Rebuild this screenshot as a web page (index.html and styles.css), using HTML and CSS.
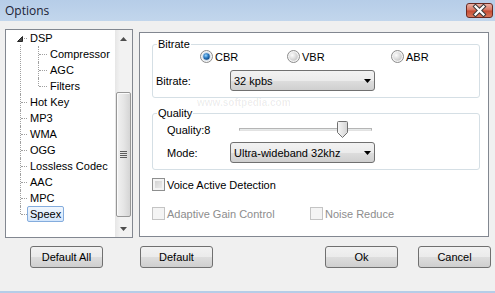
FILE: index.html
```html
<!DOCTYPE html>
<html lang="en">
<head>
  <meta charset="UTF-8">
  <title>Options</title>
  <link rel="stylesheet" href="styles.css">
</head>
<body>
  <div class="window">
    <div class="titlebar">
      <span class="title">Options</span>
      <button class="close" type="button">
        <svg width="25" height="13" viewBox="0 0 25 13">
          <path d="M8.5 2.5 L16.5 10.5 M16.5 2.5 L8.5 10.5" stroke="#3a3a3a" stroke-width="4.2" stroke-linecap="square"/>
          <path d="M8.5 2.5 L16.5 10.5 M16.5 2.5 L8.5 10.5" stroke="#fff" stroke-width="2.2" stroke-linecap="square"/>
        </svg>
      </button>
    </div>

    <div class="client">
      <div class="main">
        <div class="tree">
          <ul class="tree-list">
            <li class="node first">
              <div class="row">
                <svg class="expander" width="6" height="6" viewBox="0 0 6 6"><polygon points="5.5,0.5 5.5,5.5 0.5,5.5" fill="#4a4a4a" stroke="#262626" stroke-width="1"/></svg>
                <span class="label">DSP</span>
              </div>
              <ul class="sub">
                <li class="node"><div class="row"><span class="label">Compressor</span></div></li>
                <li class="node"><div class="row"><span class="label">AGC</span></div></li>
                <li class="node last"><div class="row"><span class="label">Filters</span></div></li>
              </ul>
            </li>
            <li class="node"><div class="row"><span class="label">Hot Key</span></div></li>
            <li class="node"><div class="row"><span class="label">MP3</span></div></li>
            <li class="node"><div class="row"><span class="label">WMA</span></div></li>
            <li class="node"><div class="row"><span class="label">OGG</span></div></li>
            <li class="node"><div class="row"><span class="label">Lossless Codec</span></div></li>
            <li class="node"><div class="row"><span class="label">AAC</span></div></li>
            <li class="node"><div class="row"><span class="label">MPC</span></div></li>
            <li class="node last"><div class="row"><span class="label selected">Speex</span></div></li>
          </ul>
          <div class="scrollbar">
            <div class="scroll-btn">
              <svg width="7" height="4" viewBox="0 0 7 4"><polygon points="3.5,0 7,4 0,4" fill="#4d4d4d"/></svg>
            </div>
            <div class="scroll-track">
              <div class="thumb">
                <svg width="7" height="8" viewBox="0 0 7 8">
                  <path d="M0 0.5 H7 M0 2.5 H7 M0 4.5 H7 M0 6.5 H7" stroke="#5c5c5c" stroke-width="1"/>
                </svg>
              </div>
            </div>
            <div class="scroll-btn">
              <svg width="7" height="4" viewBox="0 0 7 4"><polygon points="0,0 7,0 3.5,4" fill="#4d4d4d"/></svg>
            </div>
          </div>
        </div>

        <div class="panel">
          <fieldset class="group">
            <legend>Bitrate</legend>
            <div class="radio-row">
              <label class="radio wide1">
                <svg width="13" height="13" viewBox="0 0 13 13">
                  <defs>
                    <radialGradient id="dot" cx="0.4" cy="0.35" r="0.7">
                      <stop offset="0" stop-color="#9fd6fb"/>
                      <stop offset="0.5" stop-color="#2d7fc7"/>
                      <stop offset="1" stop-color="#0d3f78"/>
                    </radialGradient>
                  </defs>
                  <circle cx="6.5" cy="6.5" r="6" fill="#f4f4f4" stroke="#8b8b8b"/>
                  <circle cx="6.5" cy="6.5" r="4.2" fill="#c8d8e8"/>
                  <circle cx="6.5" cy="6.5" r="3.2" fill="url(#dot)"/>
                </svg>
                CBR
              </label>
              <label class="radio wide2">
                <svg width="13" height="13" viewBox="0 0 13 13">
                  <defs>
                    <radialGradient id="off" cx="0.35" cy="0.35" r="0.75">
                      <stop offset="0" stop-color="#fdfdfd"/>
                      <stop offset="1" stop-color="#c4c4c4"/>
                    </radialGradient>
                  </defs>
                  <circle cx="6.5" cy="6.5" r="6" fill="#f4f4f4" stroke="#8b8b8b"/>
                  <circle cx="6.5" cy="6.5" r="4.3" fill="url(#off)"/>
                </svg>
                VBR
              </label>
              <label class="radio">
                <svg width="13" height="13" viewBox="0 0 13 13">
                  <circle cx="6.5" cy="6.5" r="6" fill="#f4f4f4" stroke="#8b8b8b"/>
                  <circle cx="6.5" cy="6.5" r="4.3" fill="url(#off)"/>
                </svg>
                ABR
              </label>
            </div>
            <div class="field-row">
              <span class="field-label bitrate-label">Bitrate:</span>
              <div class="combo">
                <span>32 kpbs</span>
                <svg width="7" height="4" viewBox="0 0 7 4"><polygon points="0,0 7,0 3.5,4" fill="#000"/></svg>
              </div>
            </div>
          </fieldset>

          <div class="watermark-url">www.softpedia.com</div>

          <fieldset class="group quality">
            <legend>Quality</legend>
            <div class="field-row slider-row">
              <span class="field-label quality-label">Quality:8</span>
              <div class="slider">
                <div class="track"></div>
                <svg class="slider-thumb" width="11" height="17" viewBox="0 0 11 17">
                  <defs>
                    <linearGradient id="thumbfill" x1="0" y1="0" x2="1" y2="0">
                      <stop offset="0" stop-color="#f7f7f7"/>
                      <stop offset="1" stop-color="#d4d4d4"/>
                    </linearGradient>
                  </defs>
                  <path d="M1.5 0.5 H9.5 Q10.5 0.5 10.5 1.5 V11.5 L5.5 16.5 L0.5 11.5 V1.5 Q0.5 0.5 1.5 0.5 Z" fill="url(#thumbfill)" stroke="#707070"/>
                </svg>
              </div>
            </div>
            <div class="field-row mode-row">
              <span class="field-label mode-label">Mode:</span>
              <div class="combo">
                <span>Ultra-wideband 32khz</span>
                <svg width="7" height="4" viewBox="0 0 7 4"><polygon points="0,0 7,0 3.5,4" fill="#000"/></svg>
              </div>
            </div>
          </fieldset>

          <div class="check-row">
            <label class="check"><span class="box"></span>Voice Active Detection</label>
          </div>
          <div class="check-row disabled-row">
            <label class="check disabled agc"><span class="box"></span>Adaptive Gain Control</label>
            <label class="check disabled"><span class="box"></span>Noise Reduce</label>
          </div>
        </div>
      </div>

      <div class="buttons">
        <button class="btn" type="button">Default All</button>
        <button class="btn default" type="button">Default</button>
        <button class="btn ok" type="button">Ok</button>
        <button class="btn cancel" type="button">Cancel</button>
      </div>
    </div>
  </div>
</body>
</html>
```

FILE: styles.css
```css
body {
  margin: 0;
  font-family: "Liberation Sans", Arial, sans-serif;
  font-size: 11px;
  color: #000;
}
.window {
  width: 495px;
  height: 293px;
  box-sizing: border-box;
  display: flex;
  flex-direction: column;
  background: #f0f0f0;
  border-bottom: 2px solid #b6cde8;
}
.titlebar {
  height: 21px;
  flex: none;
  display: flex;
  align-items: flex-start;
  padding-left: 5px;
  background: linear-gradient(#b6cde8, #c2d6ec);
}
.title {
  font-family: "Open Sans", sans-serif;
  font-size: 12px;
  line-height: 21px;
  color: #1b2233;
}
.close {
  margin: 3px 2px 0 auto;
  width: 27px;
  height: 15px;
  padding: 0;
  border: 1px solid #6a2a22;
  border-radius: 3px;
  background: linear-gradient(#eab2a6, #d6735f 48%, #c54a31 52%, #d8765a);
  display: flex;
  align-items: center;
  justify-content: center;
}
.close svg {
  display: block;
}
.client {
  flex: 1;
  padding: 8px 4px 0 5px;
}
.main {
  display: flex;
  align-items: flex-start;
}

/* tree */
.tree {
  width: 128px;
  height: 209px;
  box-sizing: border-box;
  border: 1px solid #828790;
  background: #fff;
  display: flex;
}
.tree-list, .sub {
  list-style: none;
  margin: 0;
  padding: 0;
}
.tree-list {
  flex: 1;
}
.node {
  position: relative;
}
.row {
  position: relative;
  height: 16px;
  padding-left: 21px;
}
.sub .row {
  padding-left: 41px;
}
.label {
  display: inline-block;
  height: 14px;
  line-height: 15px;
  padding: 0 2px;
  border: 1px solid transparent;
  border-radius: 2px;
  white-space: nowrap;
}
.label.selected {
  border-color: #84acdd;
  background: linear-gradient(#f1f7fe, #d3e6fc);
}
/* connector lines */
.tree-list > .node::before {
  content: "";
  position: absolute;
  left: 14px;
  top: 0;
  bottom: 0;
  border-left: 1px dotted #a0a0a0;
}
.tree-list > .node.first::before {
  top: 15px;
}
.tree-list > .node.last::before {
  bottom: auto;
  height: 8px;
}
.tree-list > .node > .row::after {
  content: "";
  position: absolute;
  left: 15px;
  top: 8px;
  width: 6px;
  border-top: 1px dotted #a0a0a0;
}
.sub > .node::before {
  content: "";
  position: absolute;
  left: 32px;
  top: 0;
  bottom: 0;
  border-left: 1px dotted #a0a0a0;
}
.sub > .node.last::before {
  bottom: auto;
  height: 8px;
}
.sub .row::after {
  content: "";
  position: absolute;
  left: 33px;
  top: 8px;
  width: 8px;
  border-top: 1px dotted #a0a0a0;
}
.expander {
  position: absolute;
  left: 11px;
  top: 6px;
  z-index: 1;
  background: #fff;
}

/* scrollbar */
.scrollbar {
  width: 17px;
  display: flex;
  flex-direction: column;
  background: linear-gradient(90deg, #e6e6e6, #f2f2f2 30%, #f2f2f2);
}
.scroll-btn {
  height: 17px;
  display: flex;
  align-items: center;
  justify-content: center;
}
.scroll-btn svg {
  display: block;
}
.scroll-track {
  flex: 1;
  padding: 45px 1px 0;
}
.thumb {
  height: 125px;
  box-sizing: border-box;
  border: 1px solid #979797;
  border-radius: 2px;
  background: linear-gradient(90deg, #f1f1f1, #e6e6e6 50%, #d5d5d5);
  box-shadow: inset 1px 1px 0 #fbfbfb;
  display: flex;
  align-items: center;
  justify-content: center;
}
.thumb svg {
  display: block;
}

/* right panel */
.panel {
  position: relative;
  margin: 3px 0 0 6px;
  width: 350px;
  height: 205px;
  box-sizing: border-box;
  border: 1px solid #828790;
  background: #fff;
}
.group {
  margin: 5px 8px 0 12px;
  padding: 0 0 6px;
  border: 1px solid #d5dfe5;
  border-radius: 3px;
  min-width: 0;
}
.group.quality {
  margin-top: 9px;
}
.group legend {
  margin-left: 4px;
  padding: 0 1px;
  line-height: 12px;
}
.radio-row {
  display: flex;
  align-items: center;
  height: 13px;
  padding-left: 47px;
}
.radio {
  display: flex;
  align-items: center;
  gap: 2px;
}
.radio svg {
  display: block;
}
.radio.wide1 {
  width: 87px;
}
.radio.wide2 {
  width: 104px;
}
.field-row {
  display: flex;
  align-items: center;
  margin-top: 7px;
}
.bitrate-label {
  padding-left: 3px;
  width: 74px;
}
.slider-row {
  margin-top: 2px;
  height: 17px;
}
.mode-row {
  margin-top: 4px;
}
.quality-label {
  padding-left: 14px;
  width: 72px;
}
.mode-label {
  padding-left: 14px;
  width: 63px;
}
.combo {
  width: 145px;
  height: 21px;
  box-sizing: border-box;
  border: 1px solid #707070;
  border-radius: 3px;
  padding: 0 3px 0 3px;
  display: flex;
  align-items: center;
  justify-content: space-between;
  background: linear-gradient(#f2f2f2, #ebebeb 50%, #dddddd 51%, #cfcfcf);
}
.combo svg {
  display: block;
}
.slider {
  position: relative;
  width: 133px;
  height: 17px;
}
.track {
  margin-top: 7px;
  height: 1px;
  border: 1px solid #b5b5b5;
  border-bottom-color: #e2e2e2;
  background: #e7eaea;
}
.slider-thumb {
  position: absolute;
  left: 98px;
  top: 0;
  display: block;
}
.check-row {
  display: flex;
  margin: 8px 0 0 12px;
}
.check-row.disabled-row {
  margin-top: 16px;
}
.check {
  display: flex;
  align-items: center;
  gap: 2px;
  height: 13px;
}
.check .box {
  width: 13px;
  height: 13px;
  box-sizing: border-box;
  border: 1px solid #8e8f8f;
  background: linear-gradient(135deg, #cbcbcb, #f3f3f3);
  box-shadow: inset 0 0 0 2px #f4f4f4;
}
.check.disabled {
  color: #8d8d8d;
}
.check.disabled .box {
  border-color: #c4c4c4;
  background: #f4f4f4;
  box-shadow: none;
}
.check.agc {
  width: 158px;
}
.watermark-url {
  position: absolute;
  left: 57px;
  top: 65px;
  font-size: 10px;
  font-weight: bold;
  line-height: 10px;
  color: rgba(0, 0, 0, 0.08);
  pointer-events: none;
}

/* bottom buttons */
.buttons {
  display: flex;
  margin-top: 8px;
  padding-left: 25px;
}
.btn {
  width: 73px;
  height: 22px;
  padding: 0;
  font-family: "Liberation Sans", Arial, sans-serif;
  font-size: 11px;
  color: #000;
  border: 1px solid #707070;
  border-radius: 3px;
  background: linear-gradient(#f2f2f2, #ebebeb 50%, #dddddd 51%, #cfcfcf);
}
.btn.default {
  margin-left: 37px;
}
.btn.ok {
  margin-left: auto;
}
.btn.cancel {
  margin-left: 20px;
}
```
